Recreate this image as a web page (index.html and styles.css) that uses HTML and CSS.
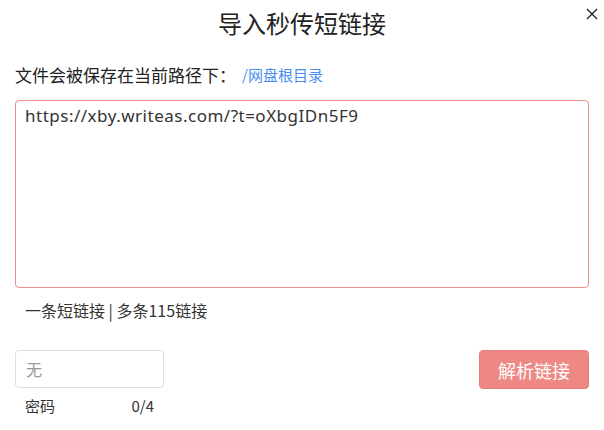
FILE: index.html
```html
<!DOCTYPE html>
<html lang="zh">
<head>
<meta charset="utf-8">
<link rel="stylesheet" href="styles.css">
</head>
<body>
<div class="dialog">
  <div class="header">
    <h1 class="title">导入秒传短链接</h1>
    <span class="close" aria-label="关闭">
      <svg width="12" height="12" viewBox="0 0 12 12"><path d="M1 1L11 11M11 1L1 11" stroke="#222" stroke-width="1.4" fill="none"/></svg>
    </span>
  </div>
  <div class="path-row">
    <span class="label">文件会被保存在当前路径下：</span><a class="path-link">/网盘根目录</a>
  </div>
  <div class="textarea">https://xby.writeas.com/?t=oXbgIDn5F9</div>
  <div class="hint">一条短链接 | 多条115链接</div>
  <div class="bottom">
    <div class="pwd">
      <div class="input">无</div>
      <div class="pwd-meta"><span>密码</span><span>0/4</span></div>
    </div>
    <button class="btn">解析链接</button>
  </div>
</div>
</body>
</html>
```

FILE: styles.css
```css
html, body {
  margin: 0;
  padding: 0;
  background: #fff;
}
body {
  font-family: "Noto Sans CJK SC", "Noto Sans", sans-serif;
  color: #222;
}
.dialog {
  width: 604px;
  height: 430px;
  box-sizing: border-box;
  padding: 0 15px;
}
.header {
  position: relative;
  height: 46px;
  display: flex;
  align-items: center;
  justify-content: center;
}
.title {
  margin: 0;
  font-size: 24px;
  font-weight: 400;
  line-height: 1;
  color: #222;
}
.close {
  position: absolute;
  right: -9px;
  top: 8px;
  display: flex;
}
.path-row {
  margin-top: 16px;
  height: 24px;
  display: flex;
  align-items: center;
}
.label {
  font-size: 17px;
  color: #222;
}
.path-link {
  margin-left: 6px;
  font-size: 15px;
  color: #4a8ef0;
}
.textarea {
  margin-top: 14px;
  height: 188px;
  box-sizing: border-box;
  border: 1px solid #f08c8a;
  border-radius: 4px;
  padding: 3px 9px;
  font-family: "Noto Sans", sans-serif;
  font-size: 17px;
  letter-spacing: 0.5px;
  color: #333;
}
.hint {
  margin-top: 10px;
  padding-left: 10px;
  font-size: 16px;
  color: #333;
}
.bottom {
  margin-top: 28px;
  display: flex;
  justify-content: space-between;
  align-items: flex-start;
}
.pwd {
  width: 149px;
}
.input {
  height: 38px;
  box-sizing: border-box;
  border: 1px solid #dcdfe6;
  border-radius: 4px;
  padding-left: 10px;
  display: flex;
  align-items: center;
  font-size: 16px;
  color: #999;
}
.pwd-meta {
  margin-top: 7px;
  padding: 0 10px 0 10px;
  display: flex;
  justify-content: space-between;
  font-size: 15px;
  color: #333;
}
.btn {
  width: 110px;
  height: 39px;
  box-sizing: border-box;
  border: 1px solid #e87d7a;
  border-radius: 4px;
  background: #ee8885;
  color: #fff;
  font-family: "Noto Sans CJK SC", sans-serif;
  font-size: 18px;
  padding: 0;
}
```
